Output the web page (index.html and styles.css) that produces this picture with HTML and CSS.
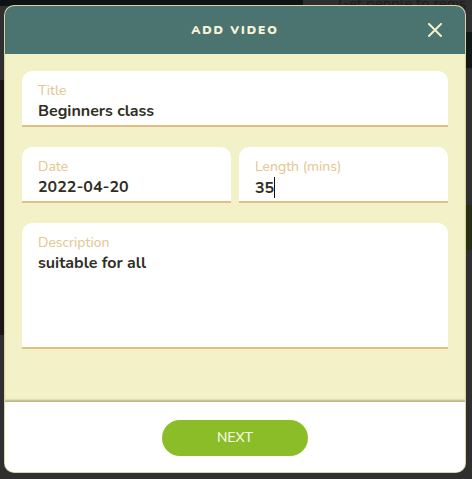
FILE: index.html
```html
<!DOCTYPE html>
<html>
<head>
  <meta name="viewport" content="width=device-width, initial-scale=1">
  <title>Add Video</title>
  <link rel="stylesheet" href="styles.css">
</head>
<body>
  <div class="backdrop">
    <div class="bg-top"></div>
    <p class="bg-text">Get people to regis</p>
    <div class="bg-photo"></div>
    <div class="bg-band"></div>
    <div class="bg-green"></div>
  </div>

  <div class="modal">
    <div class="modal-head">
      <h2>ADD VIDEO</h2>
      <button class="close" aria-label="close">
        <svg width="14" height="14" viewBox="0 0 14 14"><path d="M1 1L13 13M13 1L1 13" stroke="#f3f1c7" stroke-width="2" stroke-linecap="square"/></svg>
      </button>
    </div>

    <div class="modal-body">
      <div class="field">
        <label>Title</label>
        <div class="value">Beginners class</div>
      </div>
      <div class="row">
        <div class="field">
          <label>Date</label>
          <div class="value">2022-04-20</div>
        </div>
        <div class="field">
          <label>Length (mins)</label>
          <div class="value">35<span class="caret"></span></div>
        </div>
      </div>
      <div class="field tall">
        <label>Description</label>
        <div class="value">suitable for all</div>
      </div>
    </div>

    <div class="modal-foot">
      <button class="next">NEXT</button>
    </div>
  </div>
</body>
</html>
```

FILE: styles.css
```css
html, body {margin: 0; padding: 0;}
body {
  width: 472px; height: 479px; overflow: hidden; position: relative;
  background: #2f2f2f;
  font-family: "Nunito", Lato, "Noto Sans", sans-serif;
}

/* page behind the dialog */
.backdrop {position: absolute; inset: 0;}
.bg-top {position: absolute; left: 0; top: 0; width: 303px; height: 6px; background: #0d1215;}
.bg-text {position: absolute; left: 338px; top: 0; margin: 0; color: #1c1c1c; font-size: 15px; line-height: 8px; white-space: nowrap;}
.bg-photo {position: absolute; left: 0; top: 80px; width: 8px; height: 255px; background: #1d1614;}
.bg-band {position: absolute; right: 0; top: 32px; width: 20px; height: 36px; background: #121816;}
.bg-green {position: absolute; right: 0; top: 205px; width: 20px; height: 45px; background: #262f10;}

.modal {
  position: absolute; left: 5px; top: 6px;
  width: 460px; height: 466px;
  display: flex; flex-direction: column;
  border-radius: 9px; overflow: hidden;
  background: #fff;
  box-shadow: 0 0 0 1px #d8d4a4;
}

.modal-head {
  height: 48px; flex: none;
  background: #4b7370;
  display: flex; align-items: center; justify-content: center;
  position: relative;
}
.modal-head h2 {
  margin: 0; color: #f6f3d9;
  font-size: 12px; font-weight: 900; letter-spacing: 1.9px;
}
.close {
  position: absolute; right: 23px; top: 17px;
  width: 14px; height: 14px; padding: 0; border: 0; background: none;
  display: flex;
}

.modal-body {
  flex: 1;
  background: #f3f1c7;
  padding: 17px 17px 0 17px;
  display: flex; flex-direction: column; gap: 20px;
  box-shadow: inset 0 -3px 2px -1px #b8b48b;
}
.row {display: flex; gap: 8px;}
.row .field {flex: 1;}

.field {
  background: #fff;
  border-radius: 10px 10px 0 0;
  border-bottom: 2px solid #e4bf83;
  height: 56px; box-sizing: border-box;
  padding: 11px 16px 0;
  display: flex; flex-direction: column; gap: 2px;
}
.field.tall {height: 126px;}
.field label {
  display: block;
  color: #e2c68b;
  font-size: 14px; line-height: 17px;
}
.field .value {
  color: #2f2e25;
  font-size: 16px; font-weight: 700; line-height: 20px;
}
.caret {
  display: inline-block; width: 1px; height: 21px;
  background: #111; vertical-align: -5px;
}

.modal-foot {
  height: 70px; flex: none;
  display: flex; align-items: center; justify-content: center;
  background: #fff;
}
.next {
  width: 146px; height: 36px;
  border: 0; border-radius: 18px;
  background: #8abd28; color: #fbfbe9;
  font-family: inherit; font-size: 14px; font-weight: 500;
  margin-top: 1px;
}
```
